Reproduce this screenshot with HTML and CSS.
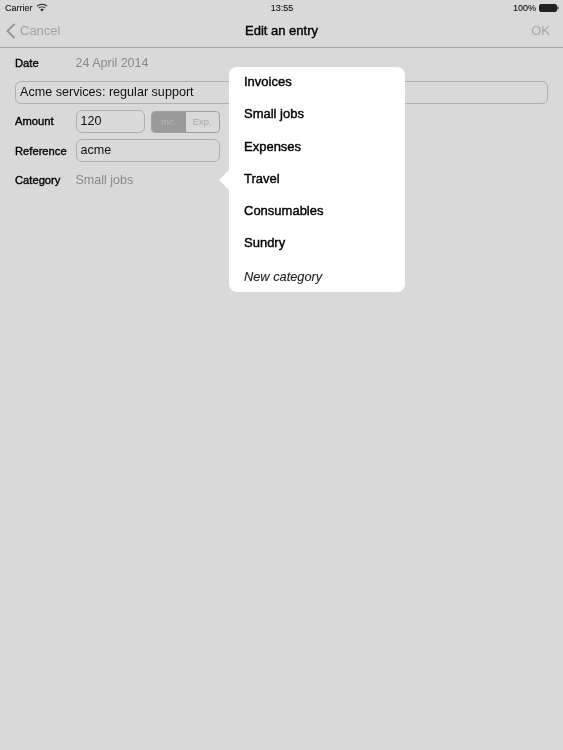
FILE: index.html
```html
<!DOCTYPE html>
<html lang="en">
<head>
<meta charset="utf-8">
<title>Edit an entry</title>
<link rel="stylesheet" href="styles.css">
</head>
<body>
<div class="screen">
  <div class="status">
    <div class="status-left">
      <span>Carrier</span>
      <svg class="wifi" width="12" height="9" viewBox="0 0 12 9"><path d="M6 8.6 4.2 6.6a2.6 2.6 0 0 1 3.6 0Z" fill="#222"/><path d="M2.9 5.2a4.5 4.5 0 0 1 6.2 0M1 3.2a7.2 7.2 0 0 1 10 0" fill="none" stroke="#222" stroke-width="1.1"/></svg>
    </div>
    <span class="status-time">13:55</span>
    <div class="status-right">
      <span>100%</span>
      <svg width="20" height="8" viewBox="0 0 20 8"><rect x=".5" y=".5" width="17" height="7" rx="1.5" fill="#222" stroke="#222"/><rect x="18.3" y="2.5" width="1.2" height="3" fill="#333"/></svg>
    </div>
  </div>
  <header class="nav">
    <div class="nav-cancel">
      <svg width="10" height="16" viewBox="0 0 10 16"><path d="M8.5 1 1.5 8l7 7" fill="none" stroke="#999" stroke-width="2"/></svg>
      <span>Cancel</span>
    </div>
    <h1 class="nav-title">Edit an entry</h1>
    <span class="nav-ok">OK</span>
  </header>
  <main class="form">
    <div class="row row-date">
      <span class="label">Date</span>
      <span class="value">24 April 2014</span>
    </div>
    <div class="field field-title">Acme services: regular support</div>
    <div class="row row-amount">
      <span class="label">Amount</span>
      <div class="field field-amount">120</div>
      <div class="segment">
        <span class="seg seg-on">Inc.</span>
        <span class="seg">Exp.</span>
      </div>
    </div>
    <div class="row row-ref">
      <span class="label">Reference</span>
      <div class="field field-ref">acme</div>
    </div>
    <div class="row row-cat">
      <span class="label">Category</span>
      <span class="value">Small jobs</span>
    </div>
  </main>
  <div class="popover">
    <span class="arrow"></span>
    <ul class="menu">
      <li>Invoices</li>
      <li>Small jobs</li>
      <li>Expenses</li>
      <li>Travel</li>
      <li>Consumables</li>
      <li>Sundry</li>
      <li class="menu-new">New category</li>
    </ul>
  </div>
</div>
</body>
</html>
```

FILE: styles.css
```css
* { box-sizing: border-box; }
html, body { margin: 0; padding: 0; }
body { font-family: "Liberation Sans", Arial, sans-serif; background: #d9d9d9; color: #111; }
.screen { position: relative; width: 563px; height: 750px; background: #d9d9d9; overflow: hidden; filter: blur(.3px); }

.status { display: grid; grid-template-columns: 1fr auto 1fr; align-items: center; height: 15px; padding: 0 4px 0 5px; font-size: 9px; color: #111; -webkit-text-stroke: .1px #111; }
.status-left { display: flex; align-items: center; gap: 3px; }
.status-right { display: flex; align-items: center; justify-content: flex-end; gap: 3px; }

.nav { display: grid; grid-template-columns: 1fr auto 1fr; align-items: center; height: 33px; padding: 0 13px 1px 6px; border-bottom: 1px solid #a9a9a9; }
.nav-cancel { display: flex; align-items: center; gap: 4px; font-size: 13px; color: #a2a2a2; }
.nav-title { margin: 0 0 0 7px; font-size: 13px; font-weight: 400; -webkit-text-stroke: .4px #000; color: #000; }
.nav-ok { justify-self: end; font-size: 13px; color: #a9a9a9; }

.form { padding: 0 15px; display: flex; flex-direction: column; }
.row { display: flex; align-items: center; }
.label { width: 60.5px; flex: none; font-size: 11.2px; -webkit-text-stroke: .35px #000; color: #000; }
.value { font-size: 12.5px; color: #8a8a8a; }
.row-date { height: 29px; padding-top: 1px; }
.field { border: 1px solid #b0b0b0; border-radius: 6px; font-size: 12.6px; color: #111; height: 23px; line-height: 21px; padding-left: 4px; background: #dadada; }
.field-title { margin-top: 4px; width: 533px; }
.row-amount { margin-top: 6px; height: 23px; }
.row-amount .label { margin-bottom: 1px; }
.field-amount { width: 69.5px; }
.segment { display: flex; width: 69px; height: 22px; margin-left: 6px; border: 1px solid #a2a2a2; border-radius: 4px; overflow: hidden; font-size: 9.5px; color: #a8a8a8; }
.seg { flex: 1; display: flex; align-items: center; justify-content: center; }
.seg-on { background: #9a9a9a; color: #b8b8b8; }
.row-ref { margin-top: 6px; height: 23px; }
.field-ref { width: 144.5px; }
.row-cat { margin-top: 6px; height: 24px; }

.popover { position: absolute; left: 229px; top: 67px; width: 176px; height: 225px; background: #fff; border-radius: 8px; }
.arrow { position: absolute; left: -10px; top: 103px; width: 0; height: 0; border-style: solid; border-width: 10px 10px 10px 0; border-color: transparent #fff transparent transparent; }
.menu { list-style: none; margin: -.75px 0 0; padding: 0 0 0 15px; font-size: 13px; color: #000; }
.menu li { height: 32.2px; line-height: 32.2px; -webkit-text-stroke: .4px #000; }
.menu .menu-new { font-style: italic; font-size: 12.8px; color: #222; -webkit-text-stroke: .1px #222; margin-top: 1.3px; }
```
